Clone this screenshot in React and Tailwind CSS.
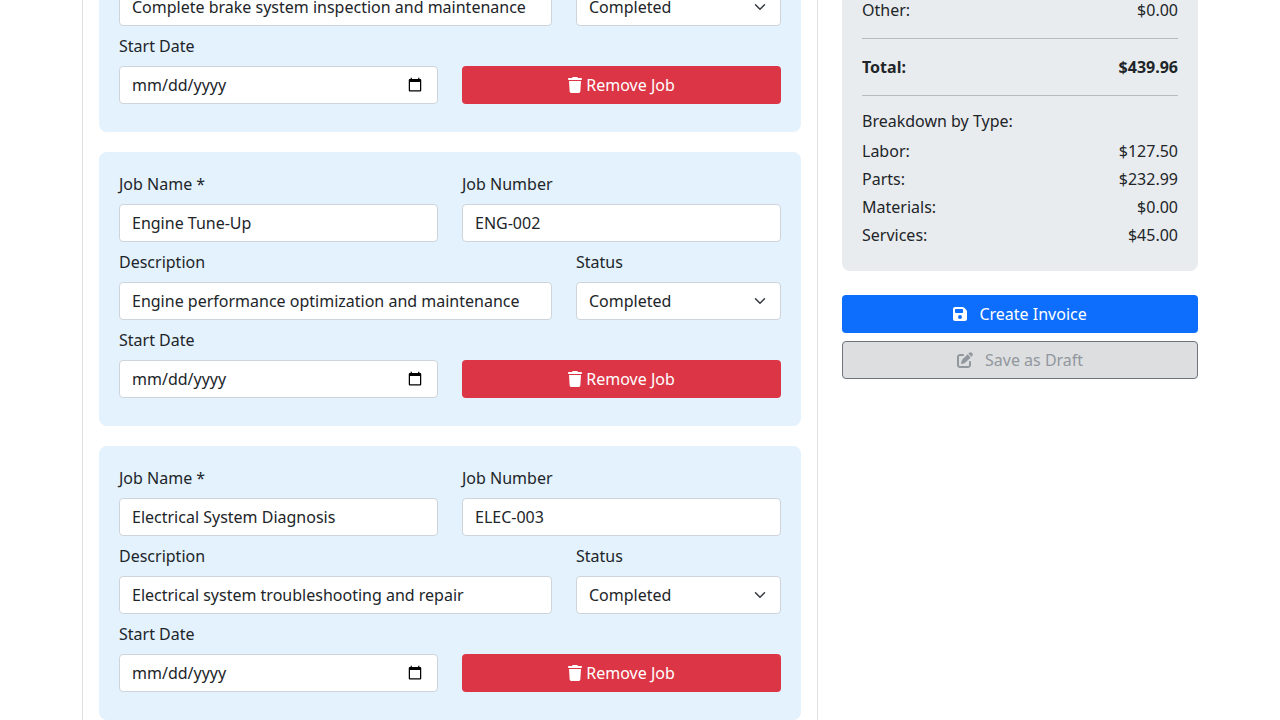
import React from "react";
import { FaTrash, FaFloppyDisk, FaPenToSquare } from "react-icons/fa6";

const jobs = [
  {
    name: "Brake System Service",
    number: "BRK-001",
    description: "Complete brake system inspection and maintenance",
  },
  {
    name: "Engine Tune-Up",
    number: "ENG-002",
    description: "Engine performance optimization and maintenance",
  },
  {
    name: "Electrical System Diagnosis",
    number: "ELEC-003",
    description: "Electrical system troubleshooting and repair",
  },
];

const breakdown = [
  ["Labor:", "$127.50"],
  ["Parts:", "$232.99"],
  ["Materials:", "$0.00"],
  ["Services:", "$45.00"],
];

const control =
  "block h-[38px] w-full appearance-none rounded-[4px] border border-[#ced4da] bg-white px-3 py-1.5 text-base leading-6 text-[#212529] outline-none";

const dateParts =
  "[&::-webkit-datetime-edit-month-field]:p-0 [&::-webkit-datetime-edit-day-field]:p-0 [&::-webkit-datetime-edit-year-field]:p-0";

function Field({ label, className, children }) {
  return (
    <label className={className}>
      <span className="mb-2 block h-6">{label}</span>
      {children}
    </label>
  );
}

function StatusSelect() {
  return (
    <span className="relative block">
      <select className={control} defaultValue="Completed">
        <option>Completed</option>
        <option>Pending</option>
      </select>
      <svg
        className="pointer-events-none absolute top-[13px] right-[13px] h-3 w-4"
        viewBox="0 0 16 16"
        fill="none"
        stroke="#343a40"
        strokeWidth="2"
        strokeLinecap="round"
        strokeLinejoin="round"
      >
        <path d="M2 5l6 6 6-6" />
      </svg>
    </span>
  );
}

function JobCard({ job }) {
  return (
    <section className="flex shrink-0 flex-col gap-2 rounded-lg bg-[#e3f2fd] px-5 pt-5 pb-7">
      <div className="grid grid-cols-2 gap-6">
        <Field label="Job Name *">
          <input className={control} defaultValue={job.name} />
        </Field>
        <Field label="Job Number">
          <input className={control} defaultValue={job.number} />
        </Field>
      </div>
      <div className="flex gap-6">
        <Field label="Description" className="w-[433px]">
          <input className={control} defaultValue={job.description} />
        </Field>
        <Field label="Status" className="flex-1">
          <StatusSelect />
        </Field>
      </div>
      <div className="grid grid-cols-2 items-end gap-6">
        <Field label="Start Date">
          <input type="date" className={control + " " + dateParts} />
        </Field>
        <button className="flex h-[38px] items-center justify-center gap-[4.16px] rounded-[4px] bg-[#dc3545] text-white">
          <FaTrash className="h-4 w-3.5" />
          Remove Job
        </button>
      </div>
    </section>
  );
}

function Row({ label, value, className }) {
  return (
    <div className={"flex h-6 shrink-0 justify-between " + (className || "")}>
      <span>{label}</span>
      <span>{value}</span>
    </div>
  );
}

export default function App() {
  return (
    <div className="flex h-[720px] w-full gap-6 overflow-hidden bg-white pl-[82px] font-['Noto_Sans',sans-serif] text-base leading-6 text-[#212529]">
      <main className="flex w-[736px] flex-col justify-end gap-5 border-x border-[#dfdfdf] px-4">
        {jobs.map((job) => (
          <JobCard key={job.number} job={job} />
        ))}
      </main>
      <aside className="w-[356px]">
        <div className="flex h-[271px] flex-col justify-end rounded-b-lg bg-[#e9ecef] px-5 pb-5">
          <Row label="Other:" value="$0.00" />
          <hr className="my-4 border-[#b7babe]" />
          <Row label="Total:" value="$439.96" className="font-bold" />
          <hr className="my-4 border-[#b7babe]" />
          <h6 className="mb-2 leading-[19px]">Breakdown by Type:</h6>
          {breakdown.map(([label, value]) => (
            <Row key={label} label={label} value={value} className="mb-1" />
          ))}
        </div>
        <div className="mt-6 flex flex-col gap-2">
          <button className="flex h-[38px] items-center justify-center gap-[12.16px] rounded-[4px] bg-[#0d6efd] text-white">
            <FaFloppyDisk className="h-4 w-3.5" />
            Create Invoice
          </button>
          <button
            disabled
            className="flex h-[38px] items-center justify-center gap-[12.16px] rounded-[4px] border border-[#6c757d] bg-[#dddee0] text-[#91979d]"
          >
            <FaPenToSquare className="size-4" />
            Save as Draft
          </button>
        </div>
      </aside>
    </div>
  );
}
